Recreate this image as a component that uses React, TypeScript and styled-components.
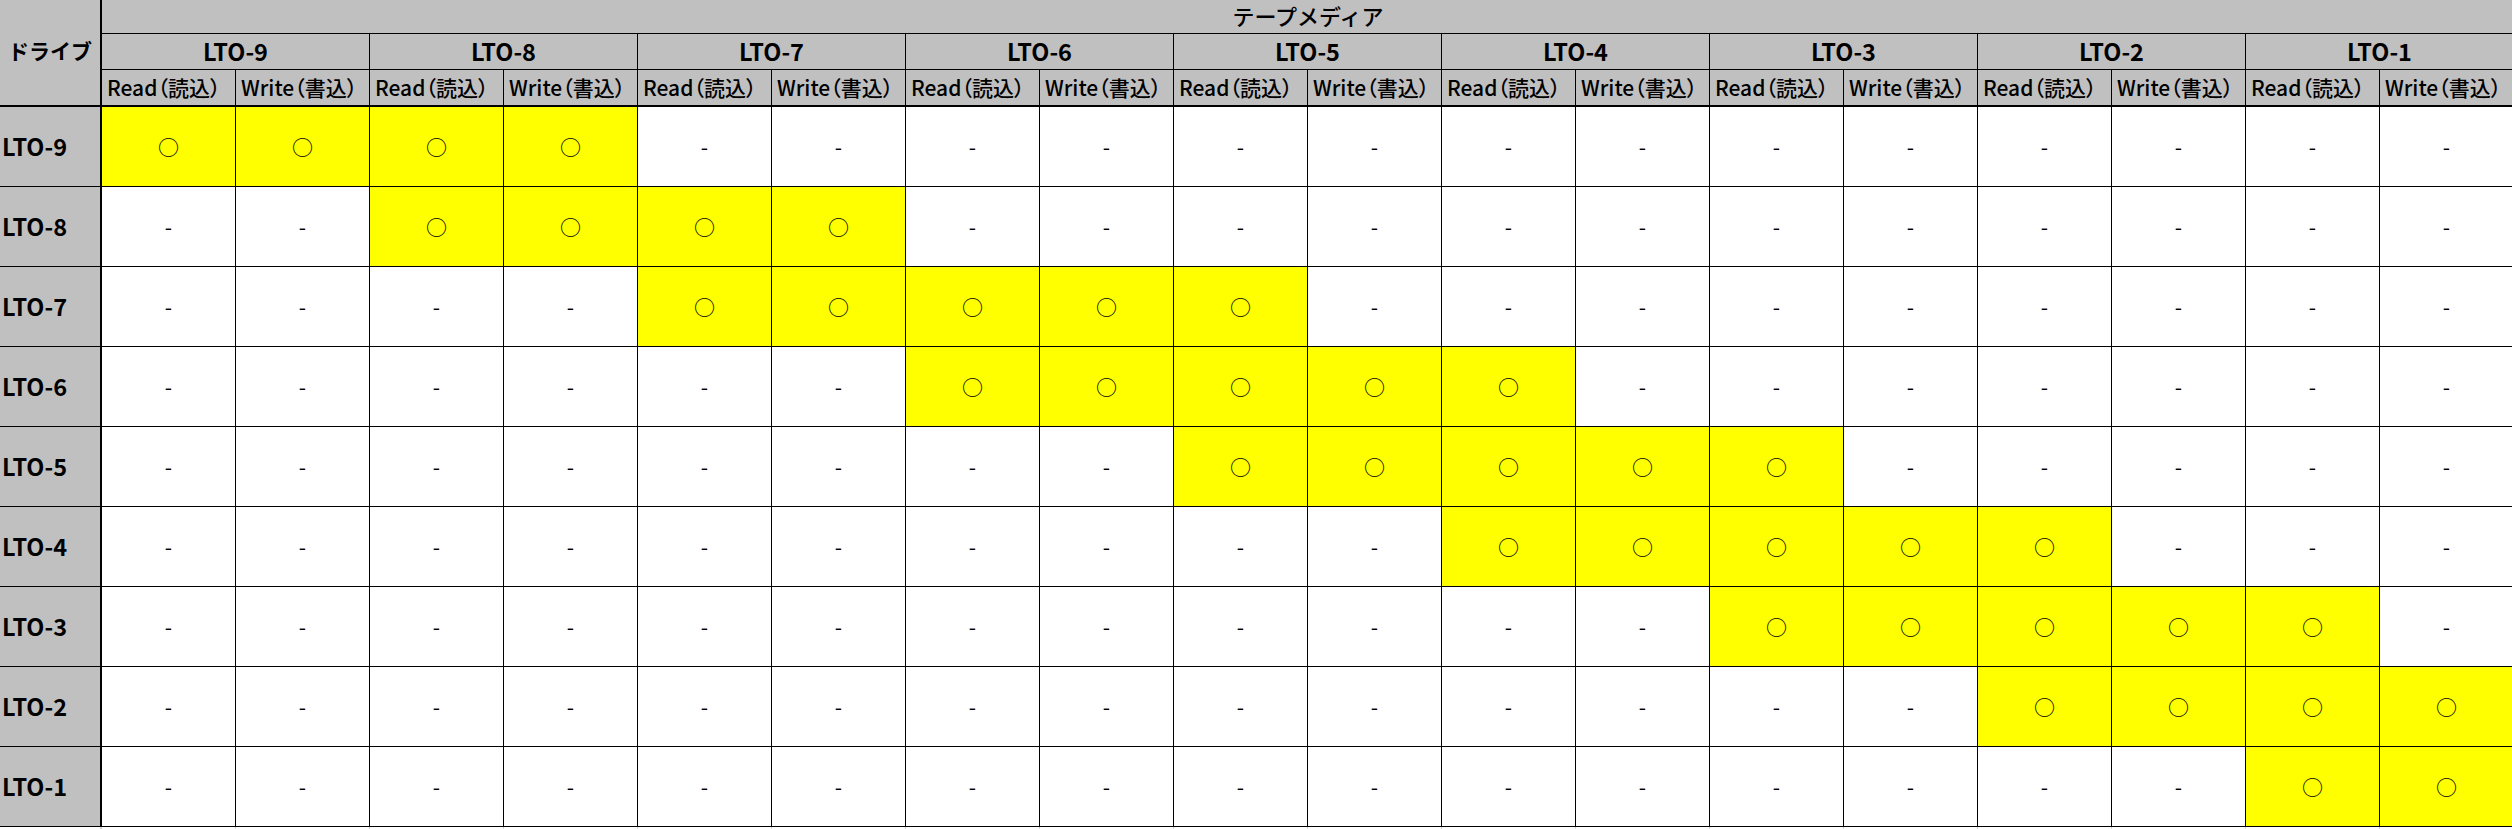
import React from 'react';
import styled, { createGlobalStyle } from 'styled-components';

const GlobalStyle = createGlobalStyle`
  html, body {
    margin: 0;
    padding: 0;
    background: #ffffff;
  }
  body {
    width: 2512px;
    height: 829px;
    overflow: hidden;
    font-family: 'Noto Sans CJK JP', 'Noto Sans', sans-serif;
    color: #000000;
  }
`;

const GENERATIONS = ['LTO-9', 'LTO-8', 'LTO-7', 'LTO-6', 'LTO-5', 'LTO-4', 'LTO-3', 'LTO-2', 'LTO-1'];

// index of first / last compatible column (R,W pairs per tape generation)
const ranges: [number, number][] = [
  [0, 3],
  [2, 5],
  [4, 8],
  [6, 10],
  [8, 12],
  [10, 14],
  [12, 16],
  [14, 17],
  [16, 17]
];

const Sheet = styled.div`
  display: grid;
  grid-template-columns: 102px repeat(18, 134px);
  grid-template-rows: 34px 36px 37px repeat(9, 80px) 20px;
  width: max-content;
`;

const Cell = styled.div`
  box-sizing: border-box;
  display: flex;
  align-items: center;
  overflow: hidden;
  white-space: nowrap;
  font-size: 21px;
  line-height: 1;
`;

const Corner = styled(Cell)`
  grid-row: span 3;
  background: #c0c0c0;
  justify-content: center;
  font-weight: 700;
  font-size: 21px;
  border-right: 2px solid #000;
  border-bottom: 2px solid #000;
  padding-bottom: 4px;
`;

const Title = styled(Cell)`
  grid-column: span 18;
  background: #c0c0c0;
  justify-content: center;
  border-bottom: 1px solid #000;
  font-weight: 500;
  font-size: 22px;
  padding-bottom: 4px;
`;

const Group = styled(Cell)`
  grid-column: span 2;
  background: #c0c0c0;
  justify-content: center;
  font-weight: 700;
  font-size: 23.5px;
  border-right: 1px solid #000;
  border-bottom: 1px solid #000;
`;

const Sub = styled(Cell)`
  background: #c0c0c0;
  font-weight: 500;
  font-feature-settings: 'palt';
  padding-left: 5px;
  border-right: 1px solid #000;
  border-bottom: 2px solid #000;
`;

const RowLabel = styled(Cell)`
  background: #c0c0c0;
  font-weight: 700;
  font-size: 23.5px;
  padding-left: 2px;
  border-right: 2px solid #000;
  border-bottom: 1px solid #000;
`;

const Data = styled(Cell)<{ $on: boolean }>`
  justify-content: center;
  background: ${(p) => (p.$on ? '#ffff00' : '#ffffff')};
  border-right: 1px solid #000;
  border-bottom: 1px solid #000;
  font-weight: 400;
`;

const Blank = styled.div<{ $first?: boolean }>`
  box-sizing: border-box;
  border-right: ${(p) => (p.$first ? '2px' : '1px')} solid #d4d4d4;
`;

export default function App() {
  return (
    <>
      <GlobalStyle />
      <Sheet>
        <Corner>ドライブ</Corner>
        <Title>テープメディア</Title>
        {GENERATIONS.map((g) => (
          <Group key={g}>{g}</Group>
        ))}
        {GENERATIONS.map((g) => (
          <React.Fragment key={g}>
            <Sub>Read（読込）</Sub>
            <Sub>Write（書込）</Sub>
          </React.Fragment>
        ))}
        {GENERATIONS.map((drive, r) => (
          <React.Fragment key={drive}>
            <RowLabel>{drive}</RowLabel>
            {Array.from({ length: 18 }, (_, c) => {
              const on = c >= ranges[r][0] && c <= ranges[r][1];
              return (
                <Data key={c} $on={on}>
                  {on ? '○' : '-'}
                </Data>
              );
            })}
          </React.Fragment>
        ))}
        {Array.from({ length: 19 }, (_, c) => (
          <Blank key={c} $first={c === 0} />
        ))}
      </Sheet>
    </>
  );
}
